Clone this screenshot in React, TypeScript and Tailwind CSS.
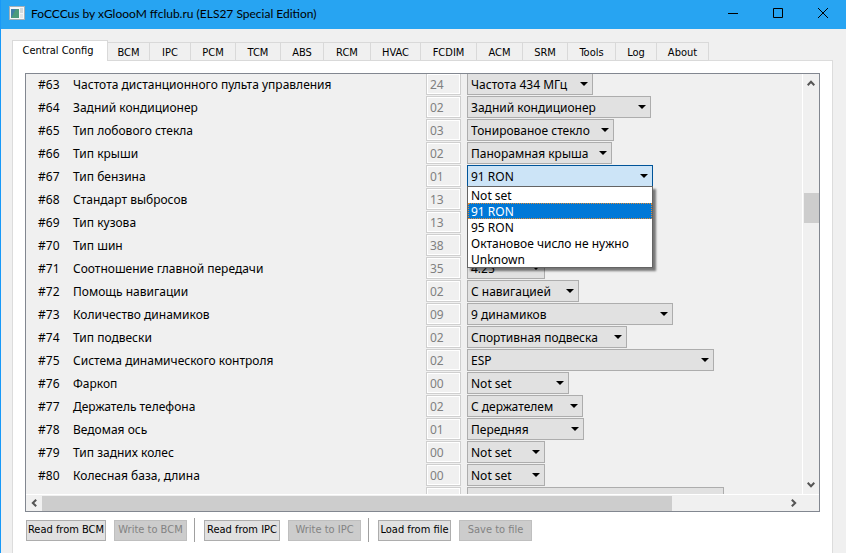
import { useState } from 'react'

import clsx from 'clsx'

const tabs = [
  { name: 'BCM', width: 'w-[42px]' },
  { name: 'IPC', width: 'w-[41px]' },
  { name: 'PCM', width: 'w-[45px]' },
  { name: 'TCM', width: 'w-[45px]' },
  { name: 'ABS', width: 'w-[43px]' },
  { name: 'RCM', width: 'w-[47px]' },
  { name: 'HVAC', width: 'w-[50px]' },
  { name: 'FCDIM', width: 'w-[56px]' },
  { name: 'ACM', width: 'w-[46px]' },
  { name: 'SRM', width: 'w-[45px]' },
  { name: 'Tools', width: 'w-[48px]' },
  { name: 'Log', width: 'w-[41px]' },
  { name: 'About', width: 'w-[52px]' },
]

type Param = { id: number; label: string; code: string; value: string; width: string; options?: string[] }

const params: Param[] = [
  { id: 63, label: 'Частота дистанционного пульта управления', code: '24', value: 'Частота 434 МГц', width: 'w-[126px]' },
  { id: 64, label: 'Задний кондиционер', code: '02', value: 'Задний кондиционер', width: 'w-[184px]' },
  { id: 65, label: 'Тип лобового стекла', code: '03', value: 'Тонированое стекло', width: 'w-[147px]' },
  { id: 66, label: 'Тип крыши', code: '02', value: 'Панорамная крыша', width: 'w-[145px]' },
  {
    id: 67,
    label: 'Тип бензина',
    code: '01',
    value: '91 RON',
    width: 'w-[186px]',
    options: ['Not set', '91 RON', '95 RON', 'Октановое число не нужно', 'Unknown'],
  },
  { id: 68, label: 'Стандарт выбросов', code: '13', value: 'Not set', width: 'w-[78px]' },
  { id: 69, label: 'Тип кузова', code: '13', value: 'Not set', width: 'w-[78px]' },
  { id: 70, label: 'Тип шин', code: '38', value: 'Not set', width: 'w-[78px]' },
  { id: 71, label: 'Соотношение главной передачи', code: '35', value: '4.25', width: 'w-[78px]' },
  { id: 72, label: 'Помощь навигации', code: '02', value: 'С навигацией', width: 'w-[112px]' },
  { id: 73, label: 'Количество динамиков', code: '09', value: '9 динамиков', width: 'w-[206px]' },
  { id: 74, label: 'Тип подвески', code: '02', value: 'Спортивная подвеска', width: 'w-[160px]' },
  { id: 75, label: 'Система динамического контроля', code: '02', value: 'ESP', width: 'w-[247px]' },
  { id: 76, label: 'Фаркоп', code: '00', value: 'Not set', width: 'w-[102px]' },
  { id: 77, label: 'Держатель телефона', code: '02', value: 'С держателем', width: 'w-[116px]' },
  { id: 78, label: 'Ведомая ось', code: '01', value: 'Передняя', width: 'w-[117px]' },
  { id: 79, label: 'Тип задних колес', code: '00', value: 'Not set', width: 'w-[78px]' },
  { id: 80, label: 'Колесная база, длина', code: '00', value: 'Not set', width: 'w-[78px]' },
]

const actions = [
  [
    { label: 'Read from BCM', width: 'w-20' },
    { label: 'Write to BCM', width: 'w-[73px]', disabled: true },
  ],
  [
    { label: 'Read from IPC', width: 'w-[76px]' },
    { label: 'Write to IPC', width: 'w-[73px]', disabled: true },
  ],
  [
    { label: 'Load from file', width: 'w-[73px]' },
    { label: 'Save to file', width: 'w-[73px]', disabled: true },
  ],
]

const Chevron = ({ className }: { className?: string }) => (
  <svg viewBox="0 0 8 6" className={clsx('h-1.5 w-2', className)} fill="none" stroke="#555" strokeWidth="2">
    <path d="M0.7 5.2 4 1.8 7.3 5.2" />
  </svg>
)

const TitleBar = () => (
  <header className="flex h-[29px] shrink-0 items-center bg-[#27a4f2] pb-[3px] pl-2">
    <svg viewBox="0 0 16 14" className="h-3.5 w-4" aria-hidden="true">
      <rect width="16" height="14" fill="#f4f6f7" />
      <rect x="0.5" y="0.5" width="15" height="13" fill="none" stroke="#a3b0b8" />
      <rect x="2" y="3" width="8" height="9" fill="#4c9a7c" />
      <path d="M2 12V3h5z" fill="#417fa8" />
      <rect x="11" y="2" width="3" height="5" fill="#d3d9dc" />
      <rect x="11" y="8" width="3" height="4" fill="#e2e6e8" />
    </svg>
    <h1 className="ml-1.5 flex-1 pt-0.5 font-[Lato,sans-serif] text-xs leading-4">
      FoCCCus by xGloooM ffclub.ru (ELS27 Special Edition)
    </h1>
    <button type="button" aria-label="Minimize" className="flex h-full w-[45px] items-center justify-center">
      <svg viewBox="0 0 10 10" className="h-2.5 w-2.5" stroke="#000">
        <path d="M0 5.5h10" />
      </svg>
    </button>
    <button type="button" aria-label="Maximize" className="flex h-full w-[45px] items-center justify-center">
      <svg viewBox="0 0 10 10" className="h-2.5 w-2.5" stroke="#000" fill="none">
        <path d="M.5.5h9v9h-9z" />
      </svg>
    </button>
    <button type="button" aria-label="Close" className="flex h-full w-[46px] items-center justify-center">
      <svg viewBox="0 0 10 10" className="h-2.5 w-2.5" stroke="#000">
        <path d="m0 0 10 10M10 0 0 10" />
      </svg>
    </button>
  </header>
)

const Dropdown = ({ param }: { param: Param }) => {
  const [value, setValue] = useState(param.value)
  const open = !!param.options

  return (
    <div className={clsx('relative h-[22px]', param.width)}>
      <select
        id={`param-${param.id}`}
        value={value}
        onChange={(e) => setValue(e.target.value)}
        className={clsx(
          'block h-full w-full appearance-none border pt-0.5 pl-[3px] leading-[18px] outline-none',
          open ? 'border-[#005499] bg-[#cce4f7]' : 'border-[#adadad] bg-[#e1e1e1]'
        )}
      >
        {(param.options ?? [param.value]).map((o) => (
          <option key={o}>{o}</option>
        ))}
      </select>
      <svg viewBox="0 0 8 4" className="pointer-events-none absolute top-[9px] right-[5px] h-1 w-2">
        <path d="M0 0h8L4 4z" />
      </svg>
      {open && (
        <ul
          role="listbox"
          className="absolute top-[21px] left-0 z-10 w-full border border-[#646464] bg-white shadow-[3px_3px_2px_rgba(0,0,0,0.5)]"
        >
          {param.options?.map((o) => (
            <li
              key={o}
              role="option"
              aria-selected={o === value}
              onClick={() => setValue(o)}
              className={clsx(
                'h-4 border border-dotted pl-0.5 leading-4',
                o === value ? 'border-[#e08a35] bg-[#0078d7] text-white' : 'border-transparent'
              )}
            >
              {o}
            </li>
          ))}
        </ul>
      )}
    </div>
  )
}

const ParamRow = ({ param }: { param: Param }) => (
  <div className="flex h-[22px] items-center">
    <span className="w-[35px] pt-0.5">#{param.id}</span>
    <label htmlFor={`param-${param.id}`} className="w-[353px] pt-0.5">
      {param.label}
    </label>
    <input
      disabled
      aria-label={`#${param.id}`}
      defaultValue={param.code}
      className="mr-1.5 h-[22px] w-[35px] border border-[#cfcfcf] pl-[3px] text-[#808080] shadow-[inset_0_0_0_1px_#fff]"
    />
    <Dropdown param={param} />
  </div>
)

const App = () => (
  <div className="flex min-h-screen flex-col border-l border-[#1899f8] bg-[#f0f0f0] text-black">
    <TitleBar />
    <main className="flex flex-1 flex-col pt-[11px] pr-[13px] pl-[11px] font-['Noto_Sans',sans-serif] text-[12px]">
      <nav
        role="tablist"
        className="z-10 -mb-px flex items-end font-['DejaVu_Sans_Condensed','DejaVu_Sans',sans-serif] text-[11px]"
      >
        <button
          type="button"
          role="tab"
          aria-selected="true"
          className="h-[21px] w-24 border border-b-0 border-[#d9d9d9] bg-white pr-1"
        >
          Central Config
        </button>
        {tabs.map((tab) => (
          <button
            key={tab.name}
            type="button"
            role="tab"
            aria-selected="false"
            className={clsx('h-[19px] border border-l-0 border-[#d9d9d9] pt-0.5', tab.width)}
          >
            {tab.name}
          </button>
        ))}
      </nav>
      <section className="flex-1 border border-b-0 border-[#dcdcdc] bg-white px-3 pt-3">
        <div className="border border-[#828790] bg-[#f0f0f0]">
          <div className="flex h-[420px]">
            <div className="flex-1 overflow-hidden">
              <div className="-mt-px flex flex-col gap-px pl-3">
                {params.map((param) => (
                  <ParamRow key={param.id} param={param} />
                ))}
                <div className="flex h-[22px] pl-[388px]">
                  <div className="mr-1.5 w-[35px] border border-[#cfcfcf] shadow-[inset_0_0_0_1px_#fff]" />
                  <div className="w-[257px] border border-[#adadad] bg-[#e1e1e1]" />
                </div>
              </div>
            </div>
            <div className="flex w-[17px] flex-col items-center border-l border-white py-1.5">
              <Chevron />
              <div className="mt-[107px] h-[30px] w-[15px] bg-[#cdcdcd]" />
              <Chevron className="mt-auto rotate-180" />
            </div>
          </div>
          <div className="flex h-[17px] items-center border-t border-white pr-[17px]">
            <Chevron className="mx-1 -rotate-90" />
            <div className="h-[15px] w-[630px] bg-[#cdcdcd]" />
            <Chevron className="mr-1 ml-auto rotate-90" />
          </div>
        </div>
        <div className="mt-[6px] flex h-6 items-center gap-[7px] pl-px font-['DejaVu_Sans_Condensed','DejaVu_Sans',sans-serif] text-[11px]">
          {actions.map((group, i) => (
            <div key={i} className={clsx('flex items-center gap-2', i > 0 && 'h-6 border-l border-[#a0a0a0] pl-[9px]')}>
              {group.map((action) => (
                <button
                  key={action.label}
                  type="button"
                  disabled={action.disabled}
                  className={clsx(
                    'h-[21px] border whitespace-nowrap',
                    action.width,
                    action.disabled ? 'border-[#bfbfbf] bg-[#cccccc] text-[#838383]' : 'border-[#adadad] bg-[#e1e1e1]'
                  )}
                >
                  {action.label}
                </button>
              ))}
            </div>
          ))}
        </div>
      </section>
    </main>
  </div>
)

export default App
